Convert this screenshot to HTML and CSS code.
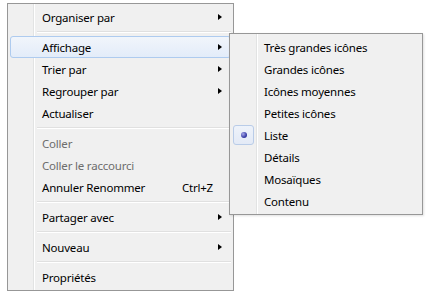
FILE: index.html
```html
<!DOCTYPE html>
<html lang="fr">
<head>
<meta charset="utf-8">
<link rel="stylesheet" href="styles.css">
</head>
<body>
<div class="menu main">
  <div class="item"><span class="ico"></span><span class="label">Organiser par</span><span class="arrow"></span></div>
  <div class="sep"></div>
  <div class="item hot"><span class="ico"></span><span class="label">Affichage</span><span class="arrow"></span></div>
  <div class="item"><span class="ico"></span><span class="label">Trier par</span><span class="arrow"></span></div>
  <div class="item"><span class="ico"></span><span class="label">Regrouper par</span><span class="arrow"></span></div>
  <div class="item"><span class="ico"></span><span class="label">Actualiser</span></div>
  <div class="sep"></div>
  <div class="item off"><span class="ico"></span><span class="label">Coller</span></div>
  <div class="item off"><span class="ico"></span><span class="label">Coller le raccourci</span></div>
  <div class="item"><span class="ico"></span><span class="label">Annuler Renommer</span><span class="key">Ctrl+Z</span></div>
  <div class="sep"></div>
  <div class="item"><span class="ico"></span><span class="label">Partager avec</span><span class="arrow"></span></div>
  <div class="sep"></div>
  <div class="item"><span class="ico"></span><span class="label">Nouveau</span><span class="arrow"></span></div>
  <div class="sep"></div>
  <div class="item"><span class="ico"></span><span class="label">Propriétés</span></div>
</div>
<div class="menu sub">
  <div class="item"><span class="ico"></span><span class="label">Très grandes icônes</span></div>
  <div class="item"><span class="ico"></span><span class="label">Grandes icônes</span></div>
  <div class="item"><span class="ico"></span><span class="label">Icônes moyennes</span></div>
  <div class="item"><span class="ico"></span><span class="label">Petites icônes</span></div>
  <div class="item"><span class="ico checked"><span class="dot"></span></span><span class="label">Liste</span></div>
  <div class="item"><span class="ico"></span><span class="label">Détails</span></div>
  <div class="item"><span class="ico"></span><span class="label">Mosaïques</span></div>
  <div class="item"><span class="ico"></span><span class="label">Contenu</span></div>
</div>
</body>
</html>
```
FILE: styles.css
```css
html, body {
  margin: 0;
  background: #fff;
}
body {
  padding: 3px 0 0 7px;
  font-family: "Noto Sans", "Open Sans", sans-serif;
  font-size: 11.5px;
  letter-spacing: -0.2px;
  color: #000;
  position: relative;
  height: 305px;
  box-sizing: border-box;
}
.menu {
  background-color: #f0f0f0;
  border: 1px solid #979797;
  padding: 2px;
  box-sizing: border-box;
}
.main {
  width: 227px;
  background-image: linear-gradient(to right, transparent 25px, #e2e3e3 25px, #e2e3e3 26px, #fff 26px, #fff 27px, transparent 27px);
}
.sub {
  position: absolute;
  left: 229px;
  top: 33px;
  width: 194px;
  background-image: linear-gradient(to right, transparent 26px, #e2e3e3 26px, #e2e3e3 27px, #fff 27px, #fff 28px, transparent 28px);
  box-shadow: 1px 1px 2px rgba(0,0,0,0.12);
}
.item {
  height: 22px;
  display: flex;
  align-items: center;
  box-sizing: border-box;
  border: 1px solid transparent;
  border-radius: 3px;
}
.ico {
  width: 21px;
  height: 20px;
  margin-right: 10px;
  flex: none;
  display: flex;
  align-items: center;
  justify-content: center;
  box-sizing: border-box;
}
.label {
  flex: 1;
  white-space: nowrap;
  padding-top: 1px;
}
.off {
  color: #6d6d6d;
}
.hot {
  border-color: #aecbef;
  background: linear-gradient(#f1f5fb, #e3ecf9);
}
.arrow {
  width: 0;
  height: 0;
  border-left: 4px solid #000;
  border-top: 3.5px solid transparent;
  border-bottom: 3.5px solid transparent;
  margin-right: 8px;
}
.key {
  margin-right: 17px;
  padding-top: 1px;
}
.sep {
  height: 8px;
  box-sizing: border-box;
  padding-top: 3px;
  margin-left: 27px;
}
.sep::after {
  content: "";
  display: block;
  border-top: 1px solid #e0e0e0;
  border-bottom: 1px solid #fff;
}
.checked {
  border: 1px solid #b9cce8;
  border-radius: 3px;
  background: linear-gradient(#eef3fa, #e3eaf6);
}
.dot {
  width: 6px;
  height: 6px;
  border-radius: 50%;
  background: radial-gradient(circle at 35% 35%, #a6a8e8, #3a3fa8 60%, #262a80);
}
```
